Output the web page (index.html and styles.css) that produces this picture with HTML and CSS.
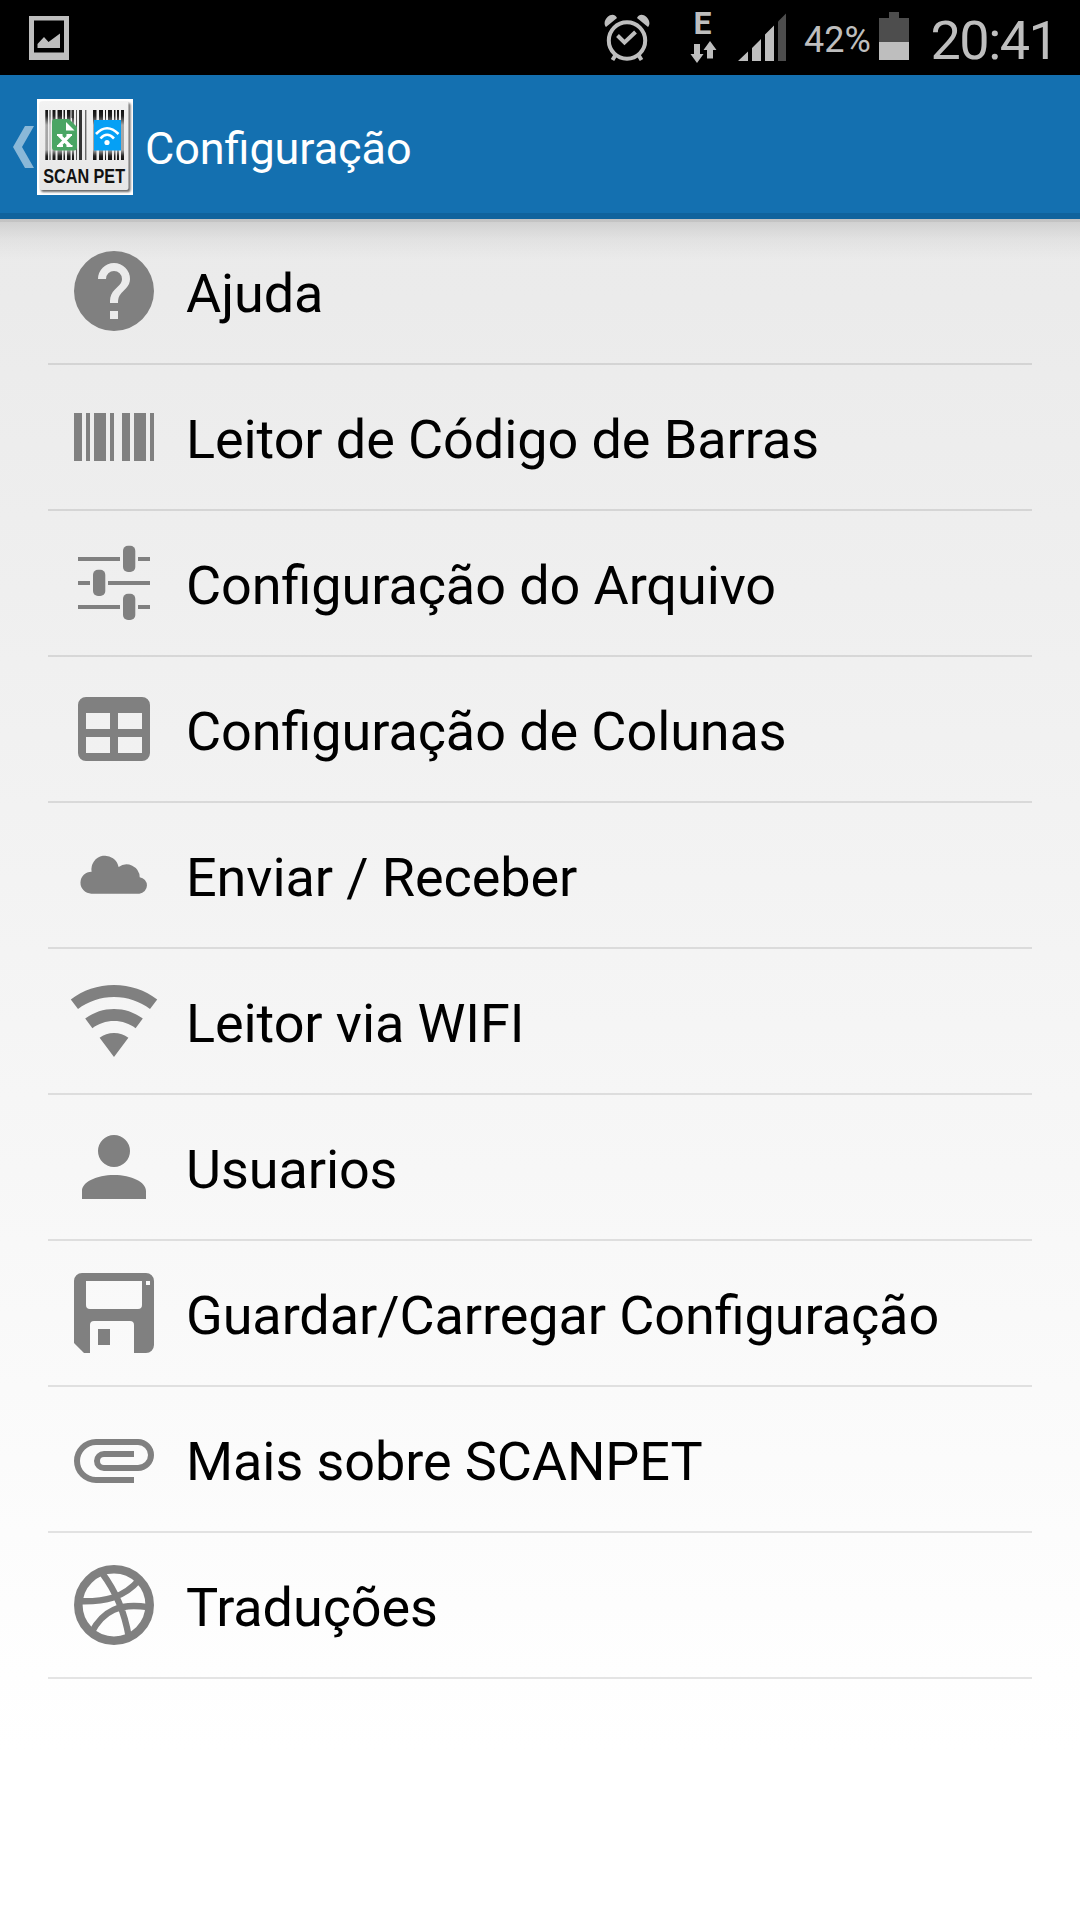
FILE: index.html
```html
<!DOCTYPE html>
<html lang="pt">
<head>
  <meta charset="UTF-8">
  <meta name="viewport" content="width=device-width, initial-scale=1">
  <title>Configuração</title>
  <link rel="stylesheet" href="styles.css">
</head>
<body>
  <div class="status-bar">
    <svg class="shot" width="40" height="44" viewBox="0 0 40 44">
      <path fill="#bebebe" fill-rule="evenodd" d="M0 0H40V44H0ZM5 4.5V36.5H35V4.5Z"/>
      <path fill="#bebebe" d="M8.5 32V28L15 21L19.500 26L31 17.500V32Z"/>
    </svg>
    <svg class="alarm" width="46" height="48" viewBox="0 0 46 48">
      <circle cx="23" cy="26.500" r="18.200" fill="none" stroke="#bebebe" stroke-width="4"/>
      <path fill="none" stroke="#bebebe" stroke-width="4" d="M13.500 21.500L20.500 28.500L31.500 18"/>
      <path fill="#bebebe" d="M2 13C-.5 10 .5 6 3.500 3C7 0 11 0 13 4ZM44 13C46.500 10 45.500 6 42.500 3C39 0 35 0 33 4Z"/>
      <path stroke="#bebebe" stroke-width="4" d="M11.500 41L8.500 46M34.500 41L37.500 46"/>
    </svg>
    <div class="network">
      <span>E</span>
      <svg width="28" height="24" viewBox="0 0 28 24">
        <path fill="#bebebe" d="M4 4H10V14H13.500L7 23L.5 14H4ZM17 18.500V10H13.500L20 1L26.500 10H23V18.500Z"/>
      </svg>
    </div>
    <svg class="signal" width="48" height="48" viewBox="0 0 48 48">
      <path fill="#bebebe" d="M0 48L10 38.500V48ZM14 48V35L23 26V48ZM27 48V21.500L36 12.500V48Z"/>
      <path fill="#4d4d4d" d="M40 48V8.500L48 .5V48Z"/>
    </svg>
    <span class="percent">42%</span>
    <svg class="battery" width="30" height="48" viewBox="0 0 30 48">
      <path fill="#4d4d4d" d="M0 6H10V0H20V6H30V48H0Z"/>
      <path fill="#bebebe" d="M0 30H30V48H0Z"/>
    </svg>
    <span class="clock">20:41</span>
  </div>

  <div class="action-bar">
    <svg class="back" width="21" height="42" viewBox="0 0 21 42">
      <path fill="#8ab8d8" d="M12 0H21L9 21L21 42H12L0 21Z"/>
    </svg>
    <svg class="logo" width="96" height="96" viewBox="0 0 96 96">
      <defs>
        <linearGradient id="face" x1="0" y1="0" x2="0" y2="1">
          <stop offset="0" stop-color="#f2f2f2"/>
          <stop offset="1" stop-color="#e6e6e6"/>
        </linearGradient>
        <linearGradient id="bars" x1="0" y1="0" x2="0" y2="1">
          <stop offset="0" stop-color="#111"/>
          <stop offset=".12" stop-color="#222"/>
          <stop offset=".3" stop-color="#222" stop-opacity=".35"/>
          <stop offset=".8" stop-color="#222" stop-opacity=".35"/>
          <stop offset=".92" stop-color="#222"/>
          <stop offset="1" stop-color="#111"/>
        </linearGradient>
        <filter id="soft"><feGaussianBlur stdDeviation=".9"/></filter>
      </defs>
      <rect width="96" height="96" fill="#fff"/>
      <rect x="4" y="4" width="89.500" height="89" rx="2" fill="#666" filter="url(#soft)"/>
      <rect x="2.500" y="2.500" width="89" height="88.500" rx="2" fill="url(#face)"/>
      <path fill="url(#bars)" d="M8.300 11H11V61H8.300ZM12.500 11H13.500V61H12.500ZM15.500 11H18.500V61H15.500ZM20.500 11H25V61H20.500ZM26.500 11H28V61H26.500ZM30 11H33.500V61H30ZM35 11H37V61H35Z"/>
      <path fill="#333" d="M34.500 11H37V19H34.500ZM39 11H39.800V61H39ZM42 11H45V61H42ZM48.300 11H49.300V61H48.300Z"/>
      <path fill="url(#bars)" d="M56 11H59.500V61H56ZM62 11H66V61H62ZM68 11H69V61H68ZM71 11H75V61H71ZM77 11H78.500V61H77ZM80 11H82V61H80ZM84 11H87V61H84Z"/>
      <path fill="#4aa564" d="M18 20H32L40 28V48.500Q40 51.500 37 51.500H18Q15 51.500 15 48.500V23Q15 20 18 20Z"/>
      <path fill="#fff" d="M29 23L37.500 31.500H29Z"/>
      <path fill="none" stroke="#fff" stroke-width="3.200" d="M22 36L33 47M33 36L22 47"/>
      <path stroke="#fff" stroke-width="2.200" d="M20 36H25.500M29.500 36H35M20 47H26M29.500 47H35.500"/>
      <rect x="57" y="21" width="27" height="30.500" fill="#05a0f5"/>
      <path fill="none" stroke="#fff" stroke-width="2.600" d="M59 35Q70 23.500 81.500 35M63.500 39.500Q70 32 77 39.500"/>
      <circle cx="70" cy="43.500" r="2.600" fill="#fff"/>
      <text class="logo-text" transform="translate(6.200 84.300) scale(.81 1)">SCAN PET</text>
    </svg>
    <h1>Configuração</h1>
  </div>

  <ul class="menu">
    <li>
      <svg class="icon" viewBox="0 0 24 24"><path d="M15.070 11.250L14.170 12.170C13.450 12.890 13 13.500 13 15H11V14.500C11 13.390 11.450 12.390 12.170 11.670L13.410 10.410C13.780 10.050 14 9.550 14 9A2 2 0 0 0 12 7A2 2 0 0 0 10 9H8A4 4 0 0 1 12 5A4 4 0 0 1 16 9C16 9.880 15.640 10.670 15.070 11.250M13 19H11V17H13M12 2A10 10 0 0 0 2 12A10 10 0 0 0 12 22A10 10 0 0 0 22 12A10 10 0 0 0 12 2Z"/></svg>
      <span>Ajuda</span>
    </li>
    <li>
      <svg class="icon" viewBox="0 0 24 24"><path d="M2 6H4V18H2V6M5 6H6V18H5V6M7 6H10V18H7V6M11 6H12V18H11V6M14 6H16V18H14V6M17 6H20V18H17V6M21 6H22V18H21V6Z"/></svg>
      <span>Leitor de Código de Barras</span>
    </li>
    <li>
      <svg class="icon" viewBox="0 0 96 96">
        <path d="M12 22H54V26H12ZM72 22H84V26H72ZM12 46H24V50H12ZM42 46H84V50H42ZM12 70H54V74H12ZM72 70H84V74H72Z"/>
        <rect x="57" y="10.700" width="12.300" height="26.300" rx="5"/>
        <rect x="27" y="34.700" width="12.300" height="26.300" rx="5"/>
        <rect x="57" y="58.700" width="12.300" height="26.300" rx="5"/>
      </svg>
      <span>Configuração do Arquivo</span>
    </li>
    <li>
      <svg class="icon" viewBox="0 0 24 24"><path d="M5 4H19A2 2 0 0 1 21 6V18A2 2 0 0 1 19 20H5A2 2 0 0 1 3 18V6A2 2 0 0 1 5 4M5 8V12H11V8H5M13 8V12H19V8H13M5 14V18H11V14H5M13 14V18H19V14H13Z"/></svg>
      <span>Configuração de Colunas</span>
    </li>
    <li>
      <svg class="icon" viewBox="0 0 96 96"><path d="M25.300 66.700A11 11 0 0 1 25.600 44.700A13.600 13.600 0 0 1 52.600 40A13.200 13.200 0 0 1 73.700 50.200A8.300 8.300 0 0 1 73.400 66.700Z"/></svg>
      <span>Enviar / Receber</span>
    </li>
    <li>
      <svg class="icon" viewBox="0 0 24 24"><path d="M12 21L15.600 16.200C14.600 15.450 13.350 15 12 15C10.650 15 9.400 15.450 8.400 16.200L12 21M12 3C7.950 3 4.210 4.340 1.200 6.600L3 9C5.500 7.120 8.620 6 12 6C15.380 6 18.500 7.120 21 9L22.800 6.600C19.790 4.340 16.050 3 12 3M12 9C9.300 9 6.810 9.890 4.800 11.400L6.600 13.800C8.100 12.670 9.970 12 12 12C14.030 12 15.900 12.670 17.400 13.800L19.200 11.400C17.190 9.890 14.700 9 12 9Z"/></svg>
      <span>Leitor via WIFI</span>
    </li>
    <li>
      <svg class="icon" viewBox="0 0 24 24"><path d="M12 4A4 4 0 0 1 16 8A4 4 0 0 1 12 12A4 4 0 0 1 8 8A4 4 0 0 1 12 4M12 14C16.420 14 20 15.790 20 18V20H4V18C4 15.790 7.580 14 12 14Z"/></svg>
      <span>Usuarios</span>
    </li>
    <li>
      <svg class="icon" viewBox="0 0 24 24"><path d="M4.500 22L2 19.500V4A2 2 0 0 1 4 2H20A2 2 0 0 1 22 4V20A2 2 0 0 1 20 22H17V15A1 1 0 0 0 16 14H7A1 1 0 0 0 6 15V22H4.500M5 4V10A1 1 0 0 0 6 11H18A1 1 0 0 0 19 10V4H5M8 16H11V20H8V16M20 4V5H21V4H20Z"/></svg>
      <span>Guardar/Carregar Configuração</span>
    </li>
    <li>
      <svg class="icon" viewBox="0 0 24 24"><path d="M7.500 18A5.500 5.500 0 0 1 2 12.500A5.500 5.500 0 0 1 7.500 7H18A4 4 0 0 1 22 11A4 4 0 0 1 18 15H9.500A2.500 2.500 0 0 1 7 12.500A2.500 2.500 0 0 1 9.500 10H17V11.500H9.500A1 1 0 0 0 8.500 12.500A1 1 0 0 0 9.500 13.500H18A2.500 2.500 0 0 0 20.500 11A2.500 2.500 0 0 0 18 8.500H7.500A4 4 0 0 0 3.500 12.500A4 4 0 0 0 7.500 16.500H17V18H7.500Z"/></svg>
      <span>Mais sobre SCANPET</span>
    </li>
    <li>
      <svg class="icon line" viewBox="0 0 24 24">
        <circle cx="12" cy="12" r="8.920" stroke-width="2.150"/>
        <path d="M9 4C12.400 8.500 14.600 13.500 15.700 20M3.500 11.050C9.800 11.200 14.500 10.200 18.300 5.700M6.300 19C9.200 13.300 13.600 11.400 20.500 12.550"/>
      </svg>
      <span>Traduções</span>
    </li>
  </ul>
</body>
</html>
```
FILE: styles.css
```css
html, body {
  height: 100%;
  margin: 0;
  overflow: hidden;
}

body {
  display: flex;
  flex-direction: column;
  font-family: Roboto, sans-serif;
  color: #000;
  background: linear-gradient(#e9e9e9 0, #ebebeb 300px, #fff 1750px);
}

.status-bar {
  display: flex;
  align-items: flex-start;
  height: 75px;
  background: #000;
  color: #bebebe;
}

.shot {
  margin: 16px auto 0 29px;
}

.alarm {
  margin-top: 14px;
}

.network {
  display: flex;
  flex-direction: column;
  align-items: center;
  width: 28px;
  margin: 12px 20px 0 40px;
}

.network span {
  padding-right: 3px;
  font-size: 32px;
  font-weight: 700;
  line-height: 23px;
  height: 28px;
}

.signal {
  margin-top: 13px;
}

.percent {
  box-sizing: border-box;
  width: 93px;
  margin-top: 19px;
  padding-left: 10px;
  text-align: center;
  font-size: 36px;
  line-height: 43px;
}

.battery {
  margin-top: 12px;
}

.clock {
  box-sizing: border-box;
  width: 171px;
  padding-right: 1px;
  text-align: center;
  font-size: 54px;
  letter-spacing: -1.5px;
  line-height: 81px;
}

.action-bar {
  display: flex;
  align-items: flex-start;
  height: 138px;
  background: #1470b0;
  border-bottom: 6px solid #10639d;
}

.back {
  margin: 51px 3px 0 13px;
}

.logo {
  margin-top: 24px;
}

.logo-text {
  font: bold 20px "Liberation Sans", sans-serif;
  fill: #111;
}

h1 {
  margin: 0 0 0 12px;
  color: #fff;
  font-size: 45px;
  font-weight: 400;
  letter-spacing: -.08px;
  font-feature-settings: "liga" 1;
  line-height: 147px;
}

.menu {
  flex: 1;
  margin: 0;
  padding: 0 48px;
  list-style: none;
  background: linear-gradient(rgba(0, 0, 0, .17) 0, rgba(0, 0, 0, .17) 3px, rgba(0, 0, 0, .11) 3px, rgba(0, 0, 0, .04) 20px, rgba(0, 0, 0, .01) 34px, transparent 42px);
}

.menu li {
  display: flex;
  align-items: center;
  height: 144px;
  padding-left: 18px;
  border-bottom: 2px solid rgba(0, 0, 0, .1);
}

.menu span {
  margin-left: 24px;
  padding-top: 5px;
  font-size: 54px;
  letter-spacing: -.09px;
  font-feature-settings: "liga" 1;
  white-space: nowrap;
}

.icon {
  width: 96px;
  height: 96px;
  fill: #808080;
}

.line {
  fill: none;
  stroke: #808080;
  stroke-width: 1.600;
}
```
